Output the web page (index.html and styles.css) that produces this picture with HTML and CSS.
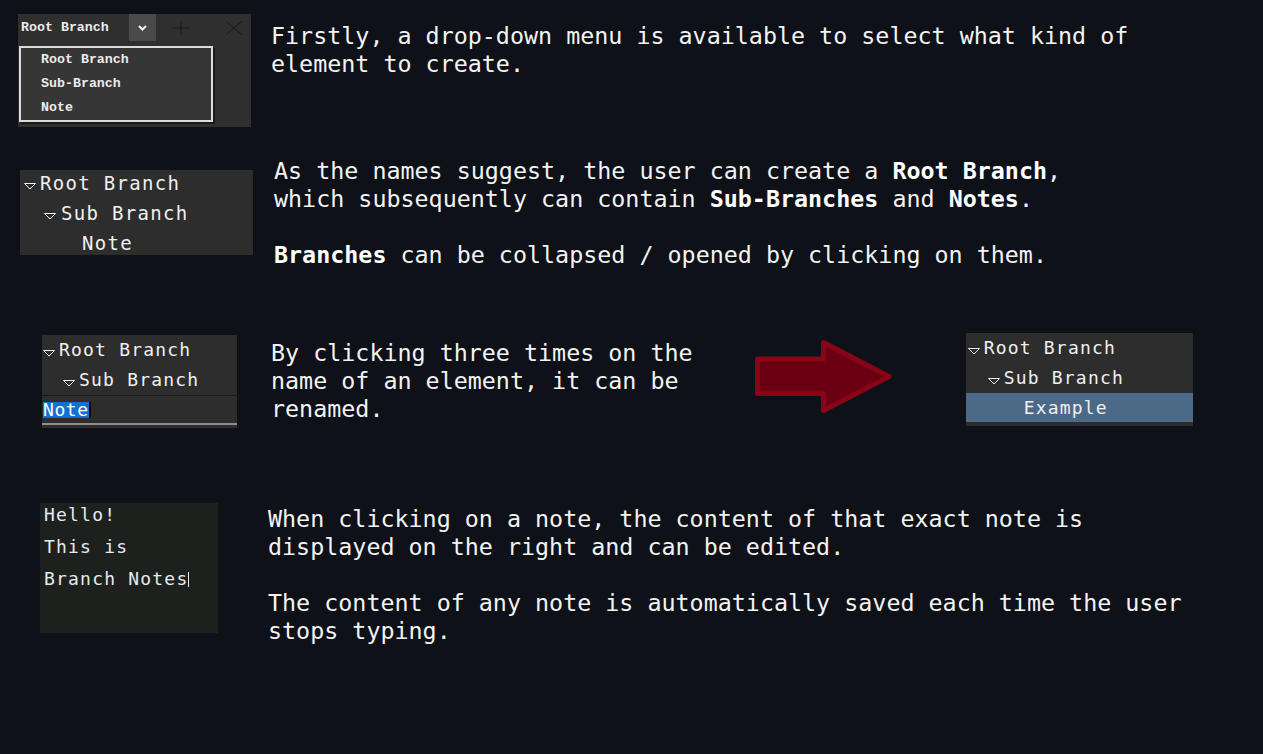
FILE: index.html
```html
<!DOCTYPE html>
<html lang="en">
<head>
<meta charset="utf-8">
<title>Branch Notes – Guide</title>
<link rel="stylesheet" href="styles.css">
</head>
<body>
<main class="page">

  <section class="row row-1">
    <div class="combo">
      <div class="combo-bar">
        <span class="combo-value">Root Branch</span>
        <span class="combo-btn">
          <svg width="9" height="6" viewBox="0 0 9 6"><path d="M1 1 L4.5 4.5 L8 1" fill="none" stroke="#f2f2f2" stroke-width="2"/></svg>
        </span>
        <span class="icon-cell plus-cell">
          <svg width="18" height="14" viewBox="0 0 18 14"><path d="M0 7 H18 M9 0 V14" stroke="#181818" stroke-width="1"/></svg>
        </span>
        <span class="icon-cell close-cell">
          <svg width="16" height="14" viewBox="0 0 16 14"><path d="M0.5 0.5 L15.5 13.5 M15.5 0.5 L0.5 13.5" stroke="#181818" stroke-width="1"/></svg>
        </span>
      </div>
      <ul class="combo-menu">
        <li>Root Branch</li>
        <li>Sub-Branch</li>
        <li>Note</li>
      </ul>
    </div>
    <p class="desc desc-1">Firstly, a drop-down menu is available to select what kind of<br>element to create.</p>
  </section>

  <section class="row row-2">
    <div class="tree tree-big">
      <div class="node lvl-0"><svg class="tri" width="12" height="26" viewBox="0 0 12 26"><polygon points="0.5,13.5 11.5,13.5 6,19" fill="none" stroke="#eeeeee" stroke-width="1"/></svg><span>Root Branch</span></div>
      <div class="node lvl-1"><svg class="tri" width="12" height="26" viewBox="0 0 12 26"><polygon points="0.5,13.5 11.5,13.5 6,19" fill="none" stroke="#eeeeee" stroke-width="1"/></svg><span>Sub Branch</span></div>
      <div class="node lvl-2"><span>Note</span></div>
    </div>
    <p class="desc desc-2">As the names suggest, the user can create a <b>Root Branch</b>,<br>which subsequently can contain <b>Sub-Branches</b> and <b>Notes</b>.<br><br><b>Branches</b> can be collapsed / opened by clicking on them.</p>
  </section>

  <section class="row row-3">
    <div class="tree tree-rename">
      <div class="node lvl-0"><svg class="tri" width="12" height="26" viewBox="0 0 12 26"><polygon points="0.5,13.5 11.5,13.5 6,19" fill="none" stroke="#eeeeee" stroke-width="1"/></svg><span>Root Branch</span></div>
      <div class="node lvl-1"><svg class="tri" width="12" height="26" viewBox="0 0 12 26"><polygon points="0.5,13.5 11.5,13.5 6,19" fill="none" stroke="#eeeeee" stroke-width="1"/></svg><span>Sub Branch</span></div>
      <div class="sep"></div>
      <div class="rename-input"><span class="selection">Note</span><span class="caret"></span></div>
      <div class="input-line"></div>
    </div>
    <p class="desc desc-3">By clicking three times on the<br>name of an element, it can be<br>renamed.</p>
    <svg class="arrow" width="140" height="74" viewBox="0 0 140 74">
      <polygon points="2.5,19 68.5,19 68.5,2.5 134,36.5 68.5,70.5 68.5,53.5 2.5,53.5" fill="#6a0011" stroke="#8a0418" stroke-width="5" stroke-linejoin="round"/>
    </svg>
    <div class="tree tree-example">
      <div class="node lvl-0"><svg class="tri" width="12" height="26" viewBox="0 0 12 26"><polygon points="0.5,13.5 11.5,13.5 6,19" fill="none" stroke="#eeeeee" stroke-width="1"/></svg><span>Root Branch</span></div>
      <div class="node lvl-1"><svg class="tri" width="12" height="26" viewBox="0 0 12 26"><polygon points="0.5,13.5 11.5,13.5 6,19" fill="none" stroke="#eeeeee" stroke-width="1"/></svg><span>Sub Branch</span></div>
      <div class="node lvl-2 selected"><span>Example</span></div>
    </div>
  </section>

  <section class="row row-4">
    <div class="notes">
      <div class="note-line">Hello!</div>
      <div class="note-line">This is</div>
      <div class="note-line">Branch Notes<span class="text-caret"></span></div>
    </div>
    <p class="desc desc-4">When clicking on a note, the content of that exact note is<br>displayed on the right and can be edited.<br><br>The content of any note is automatically saved each time the user<br>stops typing.</p>
  </section>

</main>
</body>
</html>
```

FILE: styles.css
```css
html, body {
  margin: 0;
  padding: 0;
}

body {
  background: #0e1118;
  width: 1263px;
  height: 754px;
  overflow: hidden;
  font-family: "DejaVu Sans Mono", "Liberation Mono", monospace;
  color: #f2f2f2;
}

.page {
  display: flex;
  flex-direction: column;
}

.row {
  display: flex;
  align-items: flex-start;
}

/* descriptions */
.desc {
  margin: 0;
  font-family: "DejaVu Sans Mono", monospace;
  font-size: 23.35px;
  line-height: 28px;
  white-space: nowrap;
  color: #f3f3f3;
}

.desc b {
  font-weight: bold;
  color: #ffffff;
}

/* row 1 */
.row-1 { margin-top: 14px; }
.desc-1 { margin-left: 20px; margin-top: 8px; }

.combo {
  margin-left: 18px;
  width: 233px;
  height: 113px;
  background: #2f2f2f;
  display: flex;
  flex-direction: column;
  font-family: "Liberation Mono", monospace;
  font-weight: bold;
  font-size: 13.3px;
  color: #ececec;
}

.combo-bar {
  display: flex;
  height: 27px;
  align-items: stretch;
}

.combo-value {
  width: 108px;
  padding-left: 3px;
  display: flex;
  align-items: center;
}

.combo-btn {
  width: 27px;
  background: #4a4a4a;
  display: flex;
  align-items: center;
  justify-content: center;
}

.icon-cell {
  display: flex;
  align-items: center;
  justify-content: center;
}

.plus-cell { width: 50px; }
.close-cell { width: 35px; padding-left: 10px; }

.combo-menu {
  list-style: none;
  margin: 5px 0 0 1px;
  padding: 0;
  width: 190px;
  background: #363636;
  border: 2px solid #dcdcdc;
  box-shadow: 2px 2px 0 rgba(0, 0, 0, 0.45);
}

.combo-menu li {
  height: 24px;
  line-height: 24px;
  padding-left: 20px;
}

/* trees */
.tree {
  background: #2d2d2d;
  display: flex;
  flex-direction: column;
  font-family: "DejaVu Sans Mono", monospace;
  font-size: 18px;
  letter-spacing: 1.2px;
  color: #f0f0f0;
}

.node {
  display: flex;
  align-items: center;
  height: 26px;
  line-height: 26px;
  white-space: nowrap;
}

.tri {
  flex: none;
  margin-right: 4px;
}

/* row 2 */
.row-2 { margin-top: 30px; }
.desc-2 { margin-left: 21px; }

.tree-big {
  margin-left: 20px;
  margin-top: 13px;
  width: 233px;
  height: 85px;
  gap: 4px;
  font-size: 19px;
  letter-spacing: 1.3px;
}

.tree-big .lvl-0 { padding-left: 4px; }
.tree-big .lvl-1 { padding-left: 24px; }
.tree-big .lvl-1 .tri { margin-right: 5px; }
.tree-big .lvl-2 { padding-left: 62px; }

/* row 3 */
.row-3 { margin-top: 64px; }

.tree-rename {
  margin-left: 42px;
  margin-top: 2px;
  width: 195px;
  height: 93px;
  padding-top: 2px;
  box-sizing: border-box;
}

.tree-rename .lvl-0 { padding-left: 1px; }
.tree-rename .lvl-1 { padding-left: 21px; margin-top: 4px; }

.sep {
  height: 1px;
  margin-top: 2px;
  background: #1a1a1a;
}

.rename-input {
  height: 27px;
  display: flex;
  align-items: center;
  padding-left: 1px;
}

.selection {
  background: #1070d6;
  color: #ffffff;
  height: 16px;
  line-height: 16px;
  letter-spacing: 0.6px;
  padding-right: 0;
}

.caret {
  width: 2px;
  height: 16px;
  background: #050505;
}

.input-line {
  height: 2px;
  background: #8e8e8e;
}

.desc-3 { margin-left: 34px; margin-top: 6px; }

.arrow {
  margin-left: 62px;
  margin-top: 7px;
  flex: none;
}

.tree-example {
  margin-left: 71px;
  width: 227px;
  height: 93px;
  padding-top: 2px;
  box-sizing: border-box;
}

.tree-example .lvl-0 { padding-left: 2px; }
.tree-example .lvl-1 { padding-left: 22px; margin-top: 4px; }
.tree-example .selected {
  margin-top: 2px;
  height: 29px;
  padding-left: 58px;
  background: #4a6a88;
}

/* row 4 */
.row-4 { margin-top: 75px; }

.notes {
  margin-left: 40px;
  width: 178px;
  height: 130px;
  background: #1e201e;
  display: flex;
  flex-direction: column;
  gap: 8px;
  padding-left: 4px;
  box-sizing: border-box;
  font-family: "DejaVu Sans Mono", monospace;
  font-size: 18px;
  letter-spacing: 1.2px;
  color: #e4ebf2;
}

.note-line {
  height: 24px;
  line-height: 24px;
  white-space: nowrap;
  display: flex;
  align-items: center;
}

.text-caret {
  display: inline-block;
  width: 1.5px;
  height: 15px;
  margin-left: -0.5px;
  background: #e4ebf2;
}

.desc-4 { margin-left: 50px; margin-top: 2px; }
```
